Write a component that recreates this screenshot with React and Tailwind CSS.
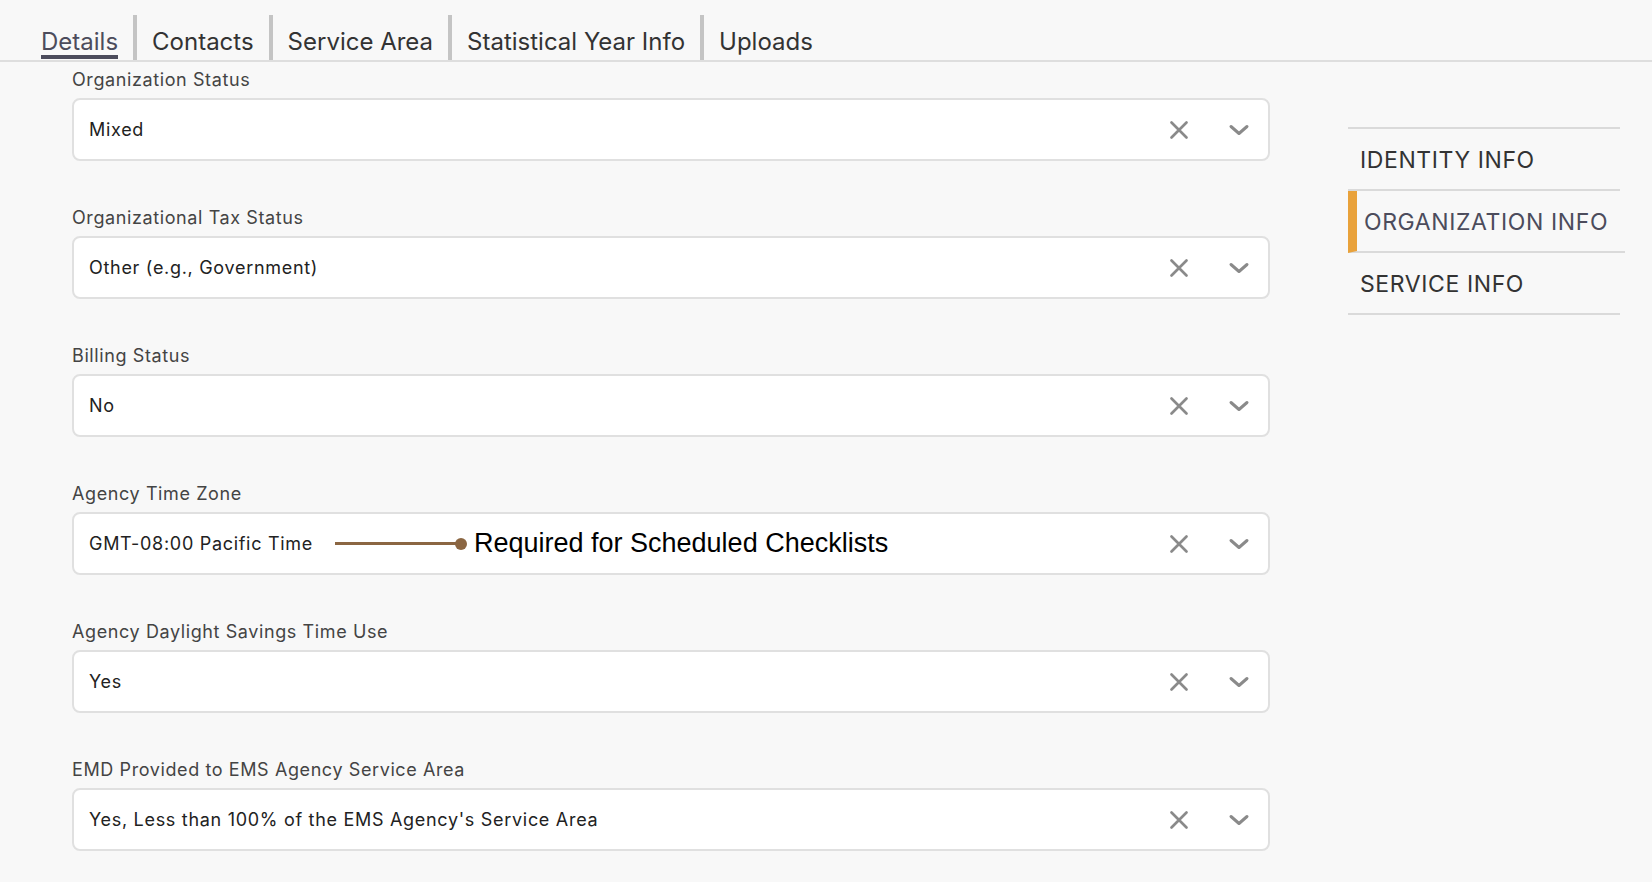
import React from "react";

const fields = [
  { label: "Organization Status", value: "Mixed" },
  { label: "Organizational Tax Status", value: "Other (e.g., Government)" },
  { label: "Billing Status", value: "No" },
  { label: "Agency Time Zone", value: "GMT-08:00 Pacific Time", note: true },
  { label: "Agency Daylight Savings Time Use", value: "Yes" },
  { label: "EMD Provided to EMS Agency Service Area", value: "Yes, Less than 100% of the EMS Agency's Service Area" },
];

const tabs = ["Details", "Contacts", "Service Area", "Statistical Year Info", "Uploads"];

function XIcon() {
  return (
    <svg width="24" height="24" viewBox="0 0 24 24" fill="none">
      <path d="M4.5 4.5 L19.5 19.5 M19.5 4.5 L4.5 19.5" stroke="#8a8a8a" strokeWidth="2.7" strokeLinecap="round" />
    </svg>
  );
}

function Chevron() {
  return (
    <svg width="24" height="24" viewBox="0 0 24 24" fill="none">
      <path d="M4 8.5 L12 15.5 L20 8.5" stroke="#8a8a8a" strokeWidth="3" strokeLinecap="round" strokeLinejoin="round" />
    </svg>
  );
}

export default function App() {
  return (
    <div className="w-[1652px] h-[882px] bg-[#f8f8f8] overflow-hidden text-[#222]" style={{ fontFamily: "Inter, 'Noto Sans', sans-serif" }}>
      <div className="h-[62px] flex items-end pl-[26px] border-b-2 border-[#dedede]">
        {tabs.map((t, i) => (
          <div
            key={t}
            className={`h-[45px] flex flex-col px-[15px] pt-[13px] ${i > 0 ? "border-l-4 border-[#c4c4c4]" : ""}`}
          >
            <span className={`text-[24px] leading-[28px] whitespace-nowrap ${i === 0 ? "text-[#4c4c5c]" : "text-[#333]"}`}>{t}</span>
            <div className={`h-[4px] mt-[-1px] ${i === 0 ? "bg-[#4c4c5c]" : "bg-transparent"}`} />
          </div>
        ))}
      </div>
      <div className="flex">
        <div className="w-[1270px] pl-[72px] pt-[6px]">
          {fields.map((f) => (
            <div key={f.label} className="mb-[45px]">
              <div className="text-[18px] leading-6 text-[#444] tracking-[0.6px] mb-[6px] whitespace-nowrap">{f.label}</div>
              <div className="h-[63px] bg-white border-2 border-[#e0e0e0] rounded-lg flex items-center pl-[15px] pr-[17px]">
                <span className="text-[18px] text-[#222] tracking-[0.7px] whitespace-nowrap">{f.value}</span>
                {f.note && (
                  <div className="flex items-center ml-[22px]">
                    <div className="w-[124px] h-[3px] bg-[#8b6642]" />
                    <div className="w-[12px] h-[12px] rounded-full bg-[#8b6642] ml-[-4px]" />
                    <span className="ml-[7px] text-[27px] text-black whitespace-nowrap" style={{ fontFamily: "'Liberation Sans', Arial, sans-serif" }}>
                      Required for Scheduled Checklists
                    </span>
                  </div>
                )}
                <div className="ml-auto flex items-center gap-[36px]">
                  <XIcon />
                  <Chevron />
                </div>
              </div>
            </div>
          ))}
        </div>
        <div className="ml-[78px] mt-[65px] w-[272px] border-t-2 border-[#dadada]">
          <div className="h-[62px] border-b-2 border-[#dadada] flex items-center pt-[2px] pl-[12px] text-[23px] text-[#333] tracking-[0.6px]">IDENTITY INFO</div>
          <div className="h-[62px] border-b-2 border-[#dadada] border-l-[9px] border-l-[#e9a23b] flex items-center pt-[2px] pl-[7px] text-[23px] text-[#4c4c5c] tracking-[0.6px] w-[277px]">ORGANIZATION INFO</div>
          <div className="h-[62px] border-b-2 border-[#dadada] flex items-center pt-[2px] pl-[12px] text-[23px] text-[#333] tracking-[0.6px]">SERVICE INFO</div>
        </div>
      </div>
    </div>
  );
}
